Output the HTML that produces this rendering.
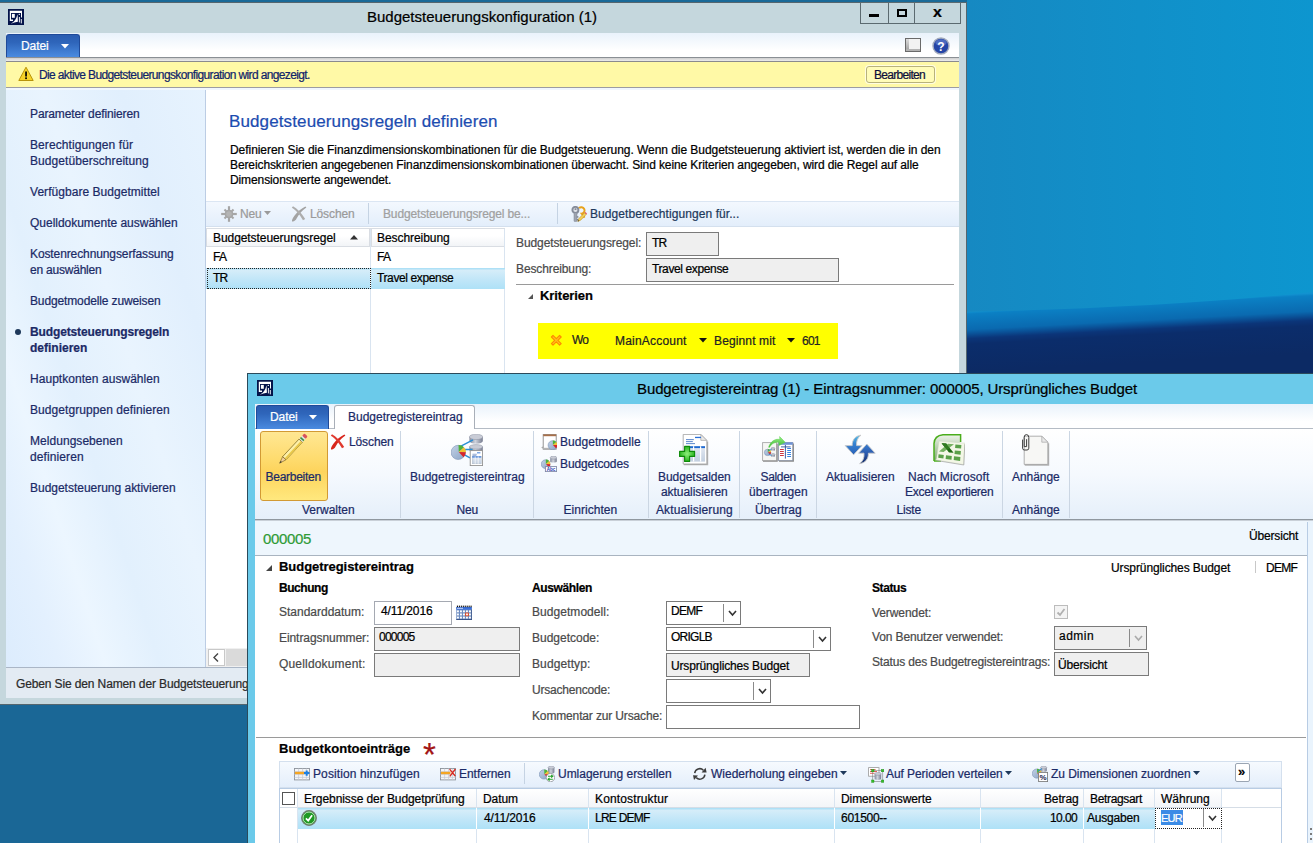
<!DOCTYPE html>
<html lang="de"><head><meta charset="utf-8"><title>Budgetsteuerungskonfiguration</title>
<style>
html,body{margin:0;padding:0}
body{width:1313px;height:843px;overflow:hidden;position:relative;font-family:"Liberation Sans", sans-serif;background:#1088c4}
body div,body svg,body span.t{position:absolute;box-sizing:border-box}
span.t{white-space:pre;-webkit-text-stroke:0.22px currentColor}

.fld{border:1px solid #7a7a7a;background:#fff}
.fldg{border:1px solid #7a7a7a;background:#efefef}

</style></head><body>
<svg width="0" height="0" style="left:0;top:0"><defs>
<linearGradient id="gPie" x1="0" y1="0" x2="1" y2="1"><stop offset="0" stop-color="#c3d2e6"/><stop offset="1" stop-color="#8aa3c6"/></linearGradient>
<linearGradient id="gCyl" x1="0" y1="0" x2="1" y2="0"><stop offset="0" stop-color="#838a9d"/><stop offset="0.45" stop-color="#cfd3dc"/><stop offset="1" stop-color="#757b8f"/></linearGradient>
<linearGradient id="gArrD" x1="0" y1="0" x2="0" y2="1"><stop offset="0" stop-color="#58bfe8"/><stop offset="0.45" stop-color="#3580d0"/><stop offset="1" stop-color="#2a62b8"/></linearGradient>
<linearGradient id="gArrU" x1="0" y1="0" x2="0" y2="1"><stop offset="0" stop-color="#3a7ed0"/><stop offset="0.5" stop-color="#2a59ac"/><stop offset="1" stop-color="#132a66"/></linearGradient>
<linearGradient id="gGrn" x1="0" y1="0" x2="0" y2="1"><stop offset="0" stop-color="#9af08a"/><stop offset="1" stop-color="#35b52b"/></linearGradient>
<linearGradient id="gXl" x1="0" y1="0" x2="0" y2="1"><stop offset="0" stop-color="#eef3ea"/><stop offset="1" stop-color="#7fa870"/></linearGradient>
<linearGradient id="gTbl" x1="0" y1="0" x2="0" y2="1"><stop offset="0" stop-color="#e3e9f2"/><stop offset="1" stop-color="#c2cfe0"/></linearGradient>
<radialGradient id="gPlus" cx="0.5" cy="0.5" r="0.6"><stop offset="0" stop-color="#8df07a"/><stop offset="1" stop-color="#16a80e"/></radialGradient>
</defs></svg>
<div style="left:0px;top:0px;width:1313px;height:843px;background:linear-gradient(90deg,#1a6a98 0,#1a6a98 960px,#1689c2 967px,#1190c9 1140px,#0d96cf 1313px)"></div>
<svg style="left:960px;top:280px" width="353" height="100" viewBox="0 0 353 100"><defs><linearGradient id="dk" gradientUnits="userSpaceOnUse" x1="0" y1="32" x2="3.2" y2="92"><stop offset="0" stop-color="#1192d0"/><stop offset="0.04" stop-color="#0b80c4"/><stop offset="0.30" stop-color="#0a6ab0"/><stop offset="0.37" stop-color="#0a5298"/><stop offset="0.45" stop-color="#0b3579"/><stop offset="0.54" stop-color="#0b2d6b"/><stop offset="1" stop-color="#0c2a64"/></linearGradient></defs>
<path d="M0 32 Q200 28 353 12 L353 100 L0 100Z" fill="url(#dk)"/></svg>
<div style="left:0px;top:704px;width:260px;height:139px;background:#1a6796"></div>
<div style="left:0px;top:0px;width:967px;height:3px;background:#1a6a98"></div>
<div style="left:0px;top:2px;width:967px;height:703px;background:#c5d7dd;border:1px solid #55666e;border-left:none"></div>
<div style="left:860px;top:2px;width:101px;height:22px;border:1px solid #5b6a70;background:#c5d7dd"></div>
<div style="left:888px;top:3px;width:1px;height:20px;background:#5b6a70"></div>
<div style="left:914px;top:3px;width:1px;height:20px;background:#5b6a70"></div>
<div style="left:869px;top:14px;width:10px;height:3px;background:#000"></div>
<div style="left:897px;top:9px;width:10px;height:8px;border:2px solid #000"></div>
<span class="t" style="left:933px;top:3.66px;font-size:16px;line-height:16px;color:#000;font-weight:700;transform:scaleY(.9);transform-origin:50% 85%;">x</span>
<svg style="left:8px;top:9px" width="16" height="16" viewBox="0 0 16 16"><rect width="16" height="16" fill="#04144a"/><path d="M1.8 1.8H14V8.6H13V3.9H3V10.5H5V11.9H1.8Z" fill="#fff"/><rect x="3.9" y="4.9" width="2.9" height="3.9" fill="#fff"/><path d="M2.8 14.8Q7.6 12.6 9.6 5.2L9.9 12.8Q6.4 13.4 2.8 14.8Z" fill="#fff"/><circle cx="11.3" cy="5.4" r="0.65" fill="#fff"/><rect x="10.9" y="8" width="0.95" height="5.4" fill="#fff"/><rect x="12.8" y="10" width="0.95" height="4.4" fill="#fff"/></svg>
<span class="t" style="left:367px;top:9.3px;font-size:15px;line-height:15px;color:#000;letter-spacing:-0.005px;">Budgetsteuerungskonfiguration (1)</span>
<div style="left:6px;top:33px;width:953px;height:665px;background:#fff"></div>
<div style="left:6px;top:33px;width:953px;height:25px;background:linear-gradient(#e9f2fb,#ffffff 70%)"></div>
<div style="left:6px;top:57px;width:953px;height:1px;background:#8a8f94"></div>
<div style="left:6px;top:58px;width:953px;height:3px;background:linear-gradient(#cfcfcf,#ececec)"></div>
<div style="left:6px;top:34px;width:74px;height:23px;background:linear-gradient(#2a5cb0 0%,#2f66bb 35%,#4a8be0 100%);border:1px solid #1f4a99;border-bottom:none;border-radius:3px 3px 0 0"></div>
<span class="t" style="left:21px;top:39.84px;font-size:12px;line-height:12px;color:#fff;letter-spacing:-0.087px;">Datei</span>
<svg style="left:61px;top:44px" width="8" height="5" viewBox="0 0 8 5"><path d="M0 0H8L4 4.5Z" fill="#fff"/></svg>
<div style="left:905px;top:38px;width:16px;height:14px;border:1px solid #6a6a6a;background:#f2f2f2"></div>
<div style="left:906px;top:39px;width:3px;height:10px;background:linear-gradient(#dcdcdc,#a8a8a8)"></div>
<div style="left:906px;top:49px;width:14px;height:2px;background:#b2b2b2"></div>
<svg style="left:932px;top:37px" width="18" height="18" viewBox="0 0 18 18"><circle cx="9" cy="9" r="8" fill="#2545a6" stroke="#a3abbd" stroke-width="1.4"/><ellipse cx="9" cy="5.6" rx="5.6" ry="3.4" fill="#6f8ad6" opacity="0.55"/><text x="9" y="13.5" font-size="12" font-weight="700" fill="#fff" text-anchor="middle" font-family="Liberation Sans, sans-serif">?</text></svg>
<div style="left:6px;top:61px;width:953px;height:27px;background:#fff9a6;border-top:1px solid #8a8a8e;border-bottom:1px solid #9c9ca2"></div>
<div style="left:6px;top:88px;width:953px;height:2px;background:#f1f7fe"></div>
<svg style="left:18px;top:66px" width="16" height="16" viewBox="0 0 16 16"><path d="M8 1.2L15.2 14.5H0.8Z" fill="#f7d228" stroke="#b8930a" stroke-width="1" stroke-linejoin="round"/><rect x="7.2" y="5.5" width="1.7" height="5" fill="#000"/><rect x="7.2" y="11.4" width="1.7" height="1.7" fill="#000"/></svg>
<span class="t" style="left:39px;top:68.84px;font-size:12px;line-height:12px;color:#10246a;letter-spacing:-0.634px;">Die aktive Budgetsteuerungskonfiguration wird angezeigt.</span>
<div style="left:866px;top:66px;width:69px;height:17px;border:1px solid #b8b27a;border-radius:3px;background:#fffcb8;box-shadow:0 0 0 1px #fffde0"></div>
<span class="t" style="left:874px;top:68.84px;font-size:12px;line-height:12px;color:#0c0c3a;letter-spacing:-0.708px;">Bearbeiten</span>
<div style="left:6px;top:90px;width:200px;height:578px;background:linear-gradient(72deg,#dcecfd 0%,#e3f0fe 14%,#ecf6ff 26%,#e2f0fd 40%,#e9f4fe 58%,#e1effd 78%,#e7f3fe 100%)"></div>
<div style="left:205px;top:90px;width:1px;height:578px;background:#bccde4"></div>
<span class="t" style="left:30px;top:107.84px;font-size:12px;line-height:12px;color:#1b2a66;letter-spacing:-0.126px;">Parameter definieren</span>
<span class="t" style="left:30px;top:138.84px;font-size:12px;line-height:12px;color:#1b2a66;letter-spacing:0.094px;">Berechtigungen für</span>
<span class="t" style="left:30px;top:154.84px;font-size:12px;line-height:12px;color:#1b2a66;letter-spacing:0.066px;">Budgetüberschreitung</span>
<span class="t" style="left:30px;top:185.84px;font-size:12px;line-height:12px;color:#1b2a66;letter-spacing:0.042px;">Verfügbare Budgetmittel</span>
<span class="t" style="left:30px;top:216.84px;font-size:12px;line-height:12px;color:#1b2a66;letter-spacing:-0.018px;">Quelldokumente auswählen</span>
<span class="t" style="left:30px;top:247.84px;font-size:12px;line-height:12px;color:#1b2a66;letter-spacing:-0.105px;">Kostenrechnungserfassung</span>
<span class="t" style="left:30px;top:263.84px;font-size:12px;line-height:12px;color:#1b2a66;letter-spacing:-0.217px;">en auswählen</span>
<span class="t" style="left:30px;top:294.84px;font-size:12px;line-height:12px;color:#1b2a66;letter-spacing:-0.131px;">Budgetmodelle zuweisen</span>
<span class="t" style="left:30px;top:372.84px;font-size:12px;line-height:12px;color:#1b2a66;letter-spacing:0.046px;">Hauptkonten auswählen</span>
<span class="t" style="left:30px;top:403.84px;font-size:12px;line-height:12px;color:#1b2a66;letter-spacing:0.068px;">Budgetgruppen definieren</span>
<span class="t" style="left:30px;top:434.84px;font-size:12px;line-height:12px;color:#1b2a66;letter-spacing:0.046px;">Meldungsebenen</span>
<span class="t" style="left:30px;top:450.84px;font-size:12px;line-height:12px;color:#1b2a66;letter-spacing:0.108px;">definieren</span>
<span class="t" style="left:30px;top:481.84px;font-size:12px;line-height:12px;color:#1b2a66;letter-spacing:-0.017px;">Budgetsteuerung aktivieren</span>
<span class="t" style="left:30px;top:325.84px;font-size:12px;line-height:12px;color:#1b2a66;font-weight:700;letter-spacing:-0.128px;">Budgetsteuerungsregeln</span>
<span class="t" style="left:30px;top:341.84px;font-size:12px;line-height:12px;color:#1b2a66;font-weight:700;letter-spacing:-0.002px;">definieren</span>
<div style="left:15px;top:329px;width:6px;height:6px;background:#1e395b;border-radius:3px"></div>
<div style="left:6px;top:667px;width:953px;height:1px;background:#aab6c6"></div>
<div style="left:6px;top:668px;width:953px;height:30px;background:#e3ebf3"></div>
<span class="t" style="left:16px;top:677.84px;font-size:12px;line-height:12px;color:#2a2a2a;letter-spacing:-0.127px;">Geben Sie den Namen der Budgetsteuerung</span>
<span class="t" style="left:229px;top:112.61px;font-size:17px;line-height:17px;color:#1c4cb0;letter-spacing:0.119px;">Budgetsteuerungsregeln definieren</span>
<span class="t" style="left:230px;top:143.84px;font-size:12px;line-height:12px;color:#000;letter-spacing:-0.053px;">Definieren Sie die Finanzdimensionskombinationen für die Budgetsteuerung. Wenn die Budgetsteuerung aktiviert ist, werden die in den</span>
<span class="t" style="left:230px;top:158.84px;font-size:12px;line-height:12px;color:#000;letter-spacing:-0.105px;">Bereichskriterien angegebenen Finanzdimensionskombinationen überwacht. Sind keine Kriterien angegeben, wird die Regel auf alle</span>
<span class="t" style="left:230px;top:173.84px;font-size:12px;line-height:12px;color:#000;letter-spacing:-0.106px;">Dimensionswerte angewendet.</span>
<div style="left:206px;top:201px;width:753px;height:26px;background:linear-gradient(#f3f8fe,#e3eefb);border-top:1px solid #dbe6f3;border-bottom:1px solid #d4e0ee"></div>
<svg style="left:221px;top:206px" width="16" height="16" viewBox="0 0 16 16"><g fill="#a6a6a6"><circle cx="8" cy="8" r="4.3"/><rect x="6.9" y="0.2" width="2.2" height="15.6" transform="rotate(0 8 8)"/><rect x="6.9" y="0.2" width="2.2" height="15.6" transform="rotate(90 8 8)"/><rect x="7" y="1.6" width="2" height="12.8" transform="rotate(45 8 8)"/><rect x="7" y="1.6" width="2" height="12.8" transform="rotate(135 8 8)"/></g><circle cx="8" cy="8" r="2.8" fill="#b4b4b4"/></svg>
<svg style="left:291px;top:206px" width="16" height="16" viewBox="0 0 16 16"><path d="M14.4 0.4C10.4 2.4 6.4 5.8 3.8 9.2C2 11.6 0.6 14 1 15.4C2.8 16 4.6 14.6 5.6 12.6C7.4 9 10.8 4.8 15.4 1.6Z" fill="#a3a3a3"/><path d="M0.8 1.8C4 3.6 8.4 8 12 14.2L14.2 13C11 7.2 5.8 2.4 2 0.2Z" fill="#adadad"/></svg>
<svg style="left:571px;top:206px" width="16" height="16" viewBox="0 0 16 16"><g><circle cx="4.4" cy="3.9" r="3" fill="#dfe2e8" stroke="#858c9a" stroke-width="1.9"/><rect x="3" y="6.6" width="3" height="9" rx="0.8" fill="#9ea4b0" stroke="#7b8290" stroke-width="0.5"/><rect x="5.8" y="10.2" width="1.6" height="1.5" fill="#7d8490"/><rect x="5.8" y="13" width="1.6" height="1.5" fill="#7d8490"/><rect x="3.6" y="2.4" width="1.8" height="1.4" fill="#6f7684"/><path d="M8 2.2A3.2 3.2 0 1 1 10.6 7.6L13.6 11.6" fill="none" stroke="#e8a21c" stroke-width="1.9"/><path d="M6.8 15.4L8 12.4L13.6 6.8L15.2 8.4L9.6 14.2Z" fill="#f5d25a" stroke="#b98a1a" stroke-width="0.6"/><path d="M13.6 6.8L14.4 6L16 7.6L15.2 8.4Z" fill="#e2525a"/><path d="M6.8 15.4L7.3 14.1L8.1 14.9Z" fill="#333"/></g></svg>
<span class="t" style="left:240px;top:207.84px;font-size:12px;line-height:12px;color:#9a9a9a;letter-spacing:-0.17px;">Neu</span>
<svg style="left:264px;top:211px" width="7" height="4" viewBox="0 0 7 4"><path d="M0 0H7L3.5 4Z" fill="#9a9a9a"/></svg>
<span class="t" style="left:310px;top:207.84px;font-size:12px;line-height:12px;color:#9a9a9a;letter-spacing:-0.116px;">Löschen</span>
<div style="left:368px;top:203px;width:1px;height:21px;background:#c5d3e3"></div>
<span class="t" style="left:383px;top:207.84px;font-size:12px;line-height:12px;color:#a0a0a0;letter-spacing:-0.132px;">Budgetsteuerungsregel be...</span>
<div style="left:557px;top:203px;width:1px;height:21px;background:#c5d3e3"></div>
<span class="t" style="left:590px;top:207.84px;font-size:12px;line-height:12px;color:#1e395b;letter-spacing:0.073px;">Budgetberechtigungen für...</span>
<div style="left:206px;top:228px;width:299px;height:19px;background:linear-gradient(#ffffff 40%,#f2f4f7);border:1px solid #d9dde3"></div>
<div style="left:369px;top:229px;width:3px;height:17px;background:#fff;border-left:1px solid #d9dde3;border-right:1px solid #d9dde3"></div>
<div style="left:370px;top:229px;width:1px;height:420px;background:#d9e4f0"></div>
<div style="left:504px;top:229px;width:1px;height:420px;background:#d9e4f0"></div>
<span class="t" style="left:213px;top:231.84px;font-size:12px;line-height:12px;color:#000;letter-spacing:-0.071px;">Budgetsteuerungsregel</span>
<svg style="left:350px;top:235px" width="8" height="5" viewBox="0 0 8 5"><path d="M4 0L8 4.5H0Z" fill="#333"/></svg>
<span class="t" style="left:377px;top:231.84px;font-size:12px;line-height:12px;color:#000;letter-spacing:-0.064px;">Beschreibung</span>
<span class="t" style="left:213px;top:250.84px;font-size:12px;line-height:12px;color:#000;letter-spacing:-0.668px;">FA</span>
<span class="t" style="left:377px;top:250.84px;font-size:12px;line-height:12px;color:#000;letter-spacing:-0.668px;">FA</span>
<div style="left:206px;top:268px;width:299px;height:21px;background:linear-gradient(#aee0f6 0,#aee0f6 1px,#d6edf9 2px,#c1e6f8 55%,#aee1f7 100%)"></div>
<div style="left:370px;top:268px;width:1px;height:21px;background:#fff"></div>
<div style="left:207px;top:268px;width:164px;height:21px;border:1px dotted #222"></div>
<span class="t" style="left:213px;top:271.84px;font-size:12px;line-height:12px;color:#000;letter-spacing:-0.75px;">TR</span>
<span class="t" style="left:377px;top:271.84px;font-size:12px;line-height:12px;color:#000;letter-spacing:-0.379px;">Travel expense</span>
<span class="t" style="left:516px;top:236.84px;font-size:12px;line-height:12px;color:#4a4a4a;letter-spacing:-0.1px;">Budgetsteuerungsregel:</span>
<div class="fldg" style="left:646px;top:232px;width:73px;height:24px;"></div>
<span class="t" style="left:652px;top:236.84px;font-size:12px;line-height:12px;color:#000;letter-spacing:-0.75px;">TR</span>
<span class="t" style="left:516px;top:262.84px;font-size:12px;line-height:12px;color:#4a4a4a;letter-spacing:-0.115px;">Beschreibung:</span>
<div class="fldg" style="left:646px;top:258px;width:193px;height:24px;"></div>
<span class="t" style="left:652px;top:262.84px;font-size:12px;line-height:12px;color:#000;letter-spacing:-0.379px;">Travel expense</span>
<div style="left:516px;top:284px;width:438px;height:1px;background:#9a9a9a"></div>
<svg style="left:528px;top:294px" width="5" height="5" viewBox="0 0 5 5"><path d="M5 0V5H0Z" fill="#555"/></svg>
<span class="t" style="left:540px;top:289.0px;font-size:13px;line-height:13px;color:#000;font-weight:700;letter-spacing:-0.065px;">Kriterien</span>
<div style="left:538px;top:323px;width:300px;height:36px;background:#ffff00"></div>
<svg style="left:550px;top:334px" width="13" height="13" viewBox="0 0 13 13"><path d="M1.4 3L3 1.4L6.3 4.7L9.6 1.4L11.2 3L7.9 6.3L11.2 9.6L9.6 11.2L6.3 7.9L3 11.2L1.4 9.6L4.7 6.3Z" fill="#ffc21a" stroke="#ff8a00" stroke-width="1.1" stroke-linejoin="round"/></svg>
<span class="t" style="left:572px;top:333.84px;font-size:12px;line-height:12px;color:#222;letter-spacing:-0.75px;">Wo</span>
<span class="t" style="left:615px;top:334.84px;font-size:12px;line-height:12px;color:#222;letter-spacing:0.196px;">MainAccount</span>
<svg style="left:699px;top:338px" width="8" height="5" viewBox="0 0 8 5"><path d="M0 0H8L4 4.5Z" fill="#111"/></svg>
<span class="t" style="left:714px;top:334.84px;font-size:12px;line-height:12px;color:#222;letter-spacing:0.13px;">Beginnt mit</span>
<svg style="left:787px;top:338px" width="8" height="5" viewBox="0 0 8 5"><path d="M0 0H8L4 4.5Z" fill="#111"/></svg>
<span class="t" style="left:802px;top:334.84px;font-size:12px;line-height:12px;color:#222;letter-spacing:-0.75px;">601</span>
<div style="left:206px;top:648px;width:60px;height:19px;background:#f0f0f0"></div>
<div style="left:208px;top:649px;width:17px;height:17px;background:#fff;border:1px solid #c8c8c8"></div>
<svg style="left:213px;top:653px" width="6" height="9" viewBox="0 0 6 9"><path d="M5 0.5L1 4.5L5 8.5" fill="none" stroke="#444" stroke-width="1.4"/></svg>
<div style="left:226px;top:649px;width:40px;height:17px;background:#dadada"></div>
<div style="left:247px;top:373px;width:1080px;height:480px;background:#6bcaea;border:1px solid #2b4a5a"></div>
<svg style="left:257px;top:380px" width="16" height="16" viewBox="0 0 16 16"><rect width="16" height="16" fill="#04144a"/><path d="M1.8 1.8H14V8.6H13V3.9H3V10.5H5V11.9H1.8Z" fill="#fff"/><rect x="3.9" y="4.9" width="2.9" height="3.9" fill="#fff"/><path d="M2.8 14.8Q7.6 12.6 9.6 5.2L9.9 12.8Q6.4 13.4 2.8 14.8Z" fill="#fff"/><circle cx="11.3" cy="5.4" r="0.65" fill="#fff"/><rect x="10.9" y="8" width="0.95" height="5.4" fill="#fff"/><rect x="12.8" y="10" width="0.95" height="4.4" fill="#fff"/></svg>
<span class="t" style="left:637px;top:381.3px;font-size:15px;line-height:15px;color:#000;letter-spacing:-0.106px;">Budgetregistereintrag (1) - Eintragsnummer: 000005, Ursprüngliches Budget</span>
<div style="left:255px;top:404px;width:1070px;height:450px;background:#fff"></div>
<div style="left:255px;top:404px;width:1070px;height:25px;background:linear-gradient(#e9f2fb,#ffffff 70%)"></div>
<div style="left:255px;top:428px;width:1070px;height:1px;background:#b5bcc5"></div>
<div style="left:256px;top:405px;width:73px;height:24px;background:linear-gradient(#2a5cb0 0%,#2f66bb 35%,#4a8be0 100%);border:1px solid #1f4a99;border-bottom:none;border-radius:3px 3px 0 0"></div>
<span class="t" style="left:270px;top:410.84px;font-size:12px;line-height:12px;color:#fff;letter-spacing:-0.087px;">Datei</span>
<svg style="left:309px;top:415px" width="8" height="5" viewBox="0 0 8 5"><path d="M0 0H8L4 4.5Z" fill="#fff"/></svg>
<div style="left:334px;top:405px;width:141px;height:24px;background:#fff;border:1px solid #a9afb8;border-bottom:none;border-radius:3px 3px 0 0"></div>
<span class="t" style="left:348px;top:410.84px;font-size:12px;line-height:12px;color:#1b2a66;letter-spacing:-0.003px;">Budgetregistereintrag</span>
<div style="left:255px;top:429px;width:1070px;height:91px;background:linear-gradient(#ffffff 0%,#f5f9fe 50%,#e5effa 100%)"></div>
<div style="left:255px;top:519px;width:1070px;height:1px;background:#8f979f"></div>
<div style="left:255px;top:520px;width:1070px;height:1px;background:#c9d0d8"></div>
<div style="left:400px;top:431px;width:1px;height:87px;background:#cbd6e3"></div>
<div style="left:533px;top:431px;width:1px;height:87px;background:#cbd6e3"></div>
<div style="left:648px;top:431px;width:1px;height:87px;background:#cbd6e3"></div>
<div style="left:739px;top:431px;width:1px;height:87px;background:#cbd6e3"></div>
<div style="left:816px;top:431px;width:1px;height:87px;background:#cbd6e3"></div>
<div style="left:1002px;top:431px;width:1px;height:87px;background:#cbd6e3"></div>
<div style="left:1069px;top:431px;width:1px;height:87px;background:#cbd6e3"></div>
<span class="t" style="left:302.0px;top:503.84px;font-size:12px;line-height:12px;color:#1b2a66;letter-spacing:-0.003px;">Verwalten</span>
<span class="t" style="left:456.5px;top:503.84px;font-size:12px;line-height:12px;color:#1b2a66;letter-spacing:-0.17px;">Neu</span>
<span class="t" style="left:563.5px;top:503.84px;font-size:12px;line-height:12px;color:#1b2a66;letter-spacing:0.035px;">Einrichten</span>
<span class="t" style="left:656.0px;top:503.84px;font-size:12px;line-height:12px;color:#1b2a66;letter-spacing:0.1px;">Aktualisierung</span>
<span class="t" style="left:755.0px;top:503.84px;font-size:12px;line-height:12px;color:#1b2a66;letter-spacing:-0.002px;">Übertrag</span>
<span class="t" style="left:896.5px;top:503.84px;font-size:12px;line-height:12px;color:#1b2a66;letter-spacing:-0.168px;">Liste</span>
<span class="t" style="left:1012.0px;top:503.84px;font-size:12px;line-height:12px;color:#1b2a66;letter-spacing:-0.062px;">Anhänge</span>
<div style="left:260px;top:431px;width:68px;height:70px;background:linear-gradient(#ffe793 0%,#fedb6e 40%,#fdd45c 58%,#ffe87e 100%);border:1px solid #d29a34;border-radius:3px"></div>
<svg style="left:276px;top:433px" width="34" height="34" viewBox="0 0 34 34"><g transform="translate(28.3 0.4) rotate(43)"><rect x="0" y="0" width="4.6" height="3.2" rx="1" fill="#d9525a"/><rect x="0" y="3.2" width="4.6" height="1.6" fill="#d8dde6"/><rect x="0" y="4.8" width="4.6" height="1.7" fill="#2f8f4e"/><rect x="0" y="6.5" width="4.6" height="1.3" fill="#d8dde6"/><rect x="0" y="7.8" width="4.6" height="24" fill="#fdf0a8" stroke="#7a6420" stroke-width="0.7"/><rect x="2.6" y="7.8" width="2" height="24" fill="#e9c84a"/><path d="M0 31.8H4.6L2.3 38.6Z" fill="#f3cf9a" stroke="#7a6420" stroke-width="0.6"/><path d="M1.5 36.2H3.1L2.3 38.8Z" fill="#2a2a2a"/></g></svg>
<svg style="left:330px;top:434px" width="16" height="16" viewBox="0 0 16 16"><path d="M14.4 0.4C10.4 2.4 6.4 5.8 3.8 9.2C2 11.6 0.6 14 1 15.4C2.8 16 4.6 14.6 5.6 12.6C7.4 9 10.8 4.8 15.4 1.6Z" fill="#d8261c"/><path d="M0.8 1.8C4 3.6 8.4 8 12 14.2L14.2 13C11 7.2 5.8 2.4 2 0.2Z" fill="#e0392e"/></svg>
<svg style="left:451px;top:434px" width="32" height="32" viewBox="0 0 32 32"><path d="M18.4 2.8880000000000003V7.111999999999998A6.7 2.688 0 0 0 31.799999999999997 7.111999999999998V2.8880000000000003Z" fill="url(#gCyl)"/><ellipse cx="25.099999999999998" cy="2.8880000000000003" rx="6.7" ry="2.688" fill="#c9ccd6" stroke="#8b90a0" stroke-width="0.5"/><path d="M18.4 12.84V16.36A6.7 2.24 0 0 0 31.799999999999997 16.36V12.84Z" fill="url(#gCyl)"/><ellipse cx="25.099999999999998" cy="12.84" rx="6.7" ry="2.24" fill="#c9ccd6" stroke="#8b90a0" stroke-width="0.5"/><path d="M9 12.6L22 5.8M12.6 15.6L21.6 15.4M12.6 20.4L19 23.8" stroke="#2a8fd6" stroke-width="1.5" fill="none"/><circle cx="7.2" cy="18.4" r="7.1" fill="url(#gPie)" stroke="#7d93b5" stroke-width="0.6"/><path d="M7.77 18.04L7.52 10.95A7.1 7.1 0 0 1 13.04 13.29Z" fill="#4fb23a"/><path d="M7.77 18.04L13.04 13.29A7.1 7.1 0 0 1 14.86 18.29Z" fill="#f2c230"/><path d="M7.77 18.04L14.86 18.29A7.1 7.1 0 0 1 12.52 23.32Z" fill="#d6262a"/><rect x="19.2" y="16.6" width="12.4" height="15" fill="#fff" stroke="#8f8f8f" stroke-width="0.9"/><rect x="26" y="18.4" width="3.4" height="0.9" fill="#2a6fd6"/><rect x="21.4" y="19.8" width="4.4" height="0.8" fill="#7a96c8"/><rect x="21.4" y="21" width="4" height="0.7" fill="#7a96c8"/><rect x="21.2" y="22.4" width="9" height="7.4" fill="url(#gTbl)" stroke="#a9b3c2" stroke-width="0.4"/><rect x="21.2" y="22.4" width="9" height="1.1" fill="#2a6fd6"/><path d="M24.2 22.4V29.8M27.2 22.4V29.8" stroke="#fff" stroke-width="0.7"/></svg>
<svg style="left:541px;top:434px" width="16" height="16" viewBox="0 0 16 16"><rect x="2.2" y="0.6" width="13" height="14.6" fill="#fff" stroke="#8a8a8a" stroke-width="0.9"/><rect x="2.2" y="0.4" width="13" height="1.8" fill="#a8704a"/><path d="M0.2 13.6L2.2 12.2V14.8Z" fill="#aaa"/><rect x="2.2" y="13.8" width="8" height="1.4" fill="#b5b5b5"/><circle cx="11.6" cy="11.2" r="4.5" fill="url(#gPie)" stroke="#7d93b5" stroke-width="0.6"/><path d="M11.96 10.97L11.80 6.48A4.5 4.5 0 0 1 15.30 7.96Z" fill="#4fb23a"/><path d="M11.96 10.97L15.30 7.96A4.5 4.5 0 0 1 16.46 11.13Z" fill="#f2c230"/><path d="M11.96 10.97L16.46 11.13A4.5 4.5 0 0 1 14.97 14.32Z" fill="#d6262a"/></svg>
<svg style="left:541px;top:456px" width="16" height="16" viewBox="0 0 16 16"><path d="M9.2 1.652V5.148000000000001A3.3 1.452 0 0 0 15.799999999999999 5.148000000000001V1.652Z" fill="url(#gCyl)"/><ellipse cx="12.5" cy="1.652" rx="3.3" ry="1.452" fill="#c9ccd6" stroke="#8b90a0" stroke-width="0.5"/><circle cx="4.6" cy="8.2" r="4.4" fill="url(#gPie)" stroke="#7d93b5" stroke-width="0.6"/><path d="M4.95 7.98L4.80 3.58A4.4 4.4 0 0 1 8.22 5.04Z" fill="#4fb23a"/><path d="M4.95 7.98L8.22 5.04A4.4 4.4 0 0 1 9.35 8.13Z" fill="#f2c230"/><path d="M4.95 7.98L9.35 8.13A4.4 4.4 0 0 1 7.90 11.25Z" fill="#d6262a"/><rect x="4.4" y="10.6" width="11.2" height="5" fill="#fff" stroke="#8088a8" stroke-width="0.9"/><text x="10" y="14.7" font-size="4.6" font-weight="700" fill="#2a3fb4" text-anchor="middle" font-family="Liberation Sans, sans-serif">Abc</text></svg>
<svg style="left:678px;top:434px" width="32" height="32" viewBox="0 0 32 32"><path d="M5.2 0.4H22.8L28.8 6.4V30.0H5.2Z" fill="#fff" stroke="#a6a6a6" stroke-width="0.9"/><path d="M22.8 0.4V6.4H28.8Z" fill="#e9e9e9" stroke="#a6a6a6" stroke-width="0.7"/><path d="M5.8 30.7H29.6V7.4" fill="none" stroke="#9a9a9a" stroke-width="1.2" opacity="0.75"/><rect x="17" y="2.8" width="6" height="1.3" fill="#2a6fd6"/><rect x="8" y="5.2" width="7.8" height="0.9" fill="#4a7cc8"/><rect x="8" y="7.2" width="6.8" height="0.9" fill="#4a7cc8"/><rect x="8" y="9.2" width="9" height="0.9" fill="#4a7cc8"/><rect x="11" y="12.2" width="16" height="15.4" fill="url(#gTbl)"/><rect x="11" y="12.2" width="16" height="1.9" fill="#1f6ad2"/><path d="M15.6 12.2V27.6M22.6 12.2V27.6" stroke="#fff" stroke-width="1.2"/><path d="M6.6 12.4H11.6V17.4H16.6V22.4H11.6V27.4H6.6V22.4H1.6V17.4H6.6Z" fill="url(#gPlus)" stroke="#0c8a08" stroke-width="1.1" stroke-linejoin="round"/></svg>
<svg style="left:762px;top:434px" width="32" height="32" viewBox="0 0 32 32"><rect x="0.6" y="8.6" width="14" height="18" fill="#f6f6f4" stroke="#a9a9a9" stroke-width="0.9"/><path d="M1 27.2H15.2V9.4" fill="none" stroke="#8c8c8c" stroke-width="1.1"/><rect x="16.6" y="8.6" width="14.2" height="18" fill="#fff" stroke="#8a94aa" stroke-width="0.9"/><rect x="16.6" y="8.4" width="14.2" height="2.4" fill="#6f93d6"/><path d="M17 27.2H31.4V9.4" fill="none" stroke="#8c8c8c" stroke-width="1.1"/><path d="M23.4 11V24.6M19 12.9H28.6" stroke="#2c4f9a" stroke-width="0.9"/><rect x="18" y="15" width="3.8" height="0.9" fill="#c8202a"/><rect x="18" y="17" width="3.8" height="0.9" fill="#c8202a"/><rect x="18" y="19" width="3.8" height="0.9" fill="#c8202a"/><rect x="18" y="21" width="3.8" height="0.9" fill="#c8202a"/><rect x="25.2" y="14" width="3.8" height="0.9" fill="#1f78e0"/><rect x="25.2" y="16" width="3.8" height="0.9" fill="#1f78e0"/><rect x="25.2" y="18" width="3.8" height="0.9" fill="#1f78e0"/><rect x="25.2" y="20" width="3.8" height="0.9" fill="#1f78e0"/><rect x="25.2" y="22" width="3.8" height="0.9" fill="#1f78e0"/><circle cx="5.6" cy="18.4" r="3.2" fill="url(#gPie)" stroke="#7d93b5" stroke-width="0.6"/><path d="M5.86 18.24L5.74 15.04A3.2 3.2 0 0 1 8.23 16.10Z" fill="#4fb23a"/><path d="M5.86 18.24L8.23 16.10A3.2 3.2 0 0 1 9.05 18.35Z" fill="#f2c230"/><path d="M5.86 18.24L9.05 18.35A3.2 3.2 0 0 1 8.00 20.62Z" fill="#d6262a"/><path d="M9 14.280000000000001V15.92A2.0 0.88 0 0 0 13 15.92V14.280000000000001Z" fill="url(#gCyl)"/><ellipse cx="11.0" cy="14.280000000000001" rx="2.0" ry="0.88" fill="#c9ccd6" stroke="#8b90a0" stroke-width="0.5"/><path d="M9 20.48V22.12A2.0 0.88 0 0 0 13 22.12V20.48Z" fill="url(#gCyl)"/><ellipse cx="11.0" cy="20.48" rx="2.0" ry="0.88" fill="#c9ccd6" stroke="#8b90a0" stroke-width="0.5"/><path d="M6.6 17L9.4 15M6.8 20L9.4 21.6" stroke="#2a8fd6" stroke-width="0.9"/><path d="M6.6 13.2C8.8 6.4 14.4 4.4 17.8 5.6L17.6 2.6L23.2 8.2L16.8 11.6L17.2 8.6C13.6 7.6 9.6 9.4 7.4 13.4Z" fill="url(#gGrn)" stroke="#5fd04f" stroke-width="0.5"/></svg>
<svg style="left:844px;top:434px" width="32" height="32" viewBox="0 0 32 32"><path d="M17 1.2C11.2 1.8 8 6 8.2 11.6H1.2L9.6 20.8L18 11.6H12.6C12.2 7.2 13.6 3.4 17 1.2Z" fill="url(#gArrD)" stroke="#c9c9c9" stroke-width="0.9"/><path d="M15.6 29.6C21.4 29 24.6 24.8 24.4 19.2H31.2L22.8 10L14.6 19.2H20C20.4 23.6 19 27.4 15.6 29.6Z" fill="url(#gArrU)" stroke="#c9c9c9" stroke-width="0.9"/></svg>
<svg style="left:933px;top:434px" width="32" height="32" viewBox="0 0 32 32"><path d="M1 27V9.6Q1.4 1.6 10 0.8H27.6V8" fill="url(#gXl)" stroke="#4bad1c" stroke-width="1.5"/><path d="M1 27H8" stroke="#4bad1c" stroke-width="1.5"/><path d="M6 7L32 9.2L30.6 30.6L3.4 26Z" fill="#f3f7e6" stroke="#cfd6c2" stroke-width="0.5"/><path d="M31.8 10.2L30.8 31L4 26.6" fill="none" stroke="#9a9a9a" stroke-width="0.9" opacity="0.7"/><path d="M22.4 10.4L28.4 10.9L28.1 14.6L22.1 14L22.4 10.4ZM21.8 16.4L27.9 17L27.6 20.8L21.5 20.1ZM5.6 20.2L10.8 20.9L10.4 24.6L5.2 23.8ZM13 21.2L18.8 21.9L18.5 25.8L12.6 25ZM21 22.2L27.4 23L27.1 27L20.7 26.1Z" fill="#5aa04a"/><path d="M8.6 9.2L13.2 9.6L20.6 18.8L16 18.4Z" fill="#1f6a14"/><path d="M15 9.8L21 10.3L10.6 18L6 17.6Z" fill="#74b060"/><path d="M8.6 9.2L13.2 9.6L17 14.4L13.6 15.6Z" fill="#2f7a20"/></svg>
<svg style="left:1020px;top:434px" width="32" height="32" viewBox="0 0 32 32"><path d="M4.2 2.2H21.8L27.8 8.2V30.4H4.2Z" fill="#f7f7f5" stroke="#a6a6a6" stroke-width="0.9"/><path d="M21.8 2.2V8.2H27.8Z" fill="#e9e9e9" stroke="#a6a6a6" stroke-width="0.7"/><path d="M4.8 31.099999999999998H28.6V9.2" fill="none" stroke="#9a9a9a" stroke-width="1.2" opacity="0.75"/><path d="M2.6 5.6V14.2Q2.6 16 4.4 16H7Q8.8 16 8.8 14.2V3.4Q8.8 0.6 6.4 0.6Q4.2 0.6 4.2 3.4V12.6H6.6V5.2" fill="none" stroke="#3c3c3c" stroke-width="1"/></svg>
<span class="t" style="left:265.5px;top:470.84px;font-size:12px;line-height:12px;color:#1b2a66;letter-spacing:-0.263px;">Bearbeiten</span>
<span class="t" style="left:349px;top:435.84px;font-size:12px;line-height:12px;color:#1b2a66;letter-spacing:-0.116px;">Löschen</span>
<span class="t" style="left:410.0px;top:470.84px;font-size:12px;line-height:12px;color:#1b2a66;letter-spacing:-0.003px;">Budgetregistereintrag</span>
<span class="t" style="left:560px;top:435.84px;font-size:12px;line-height:12px;color:#1b2a66;letter-spacing:0.051px;">Budgetmodelle</span>
<span class="t" style="left:560px;top:457.84px;font-size:12px;line-height:12px;color:#1b2a66;letter-spacing:-0.105px;">Budgetcodes</span>
<span class="t" style="left:658.0px;top:470.84px;font-size:12px;line-height:12px;color:#1b2a66;letter-spacing:-0.066px;">Budgetsalden</span>
<span class="t" style="left:661.0px;top:485.84px;font-size:12px;line-height:12px;color:#1b2a66;letter-spacing:-0.058px;">aktualisieren</span>
<span class="t" style="left:760.5px;top:470.84px;font-size:12px;line-height:12px;color:#1b2a66;letter-spacing:-0.338px;">Salden</span>
<span class="t" style="left:749.0px;top:485.84px;font-size:12px;line-height:12px;color:#1b2a66;letter-spacing:0.07px;">übertragen</span>
<span class="t" style="left:826.0px;top:470.84px;font-size:12px;line-height:12px;color:#1b2a66;letter-spacing:-0.002px;">Aktualisieren</span>
<span class="t" style="left:908.0px;top:470.84px;font-size:12px;line-height:12px;color:#1b2a66;letter-spacing:0.101px;">Nach Microsoft</span>
<span class="t" style="left:905.0px;top:485.84px;font-size:12px;line-height:12px;color:#1b2a66;letter-spacing:-0.252px;">Excel exportieren</span>
<span class="t" style="left:1012.0px;top:470.84px;font-size:12px;line-height:12px;color:#1b2a66;letter-spacing:-0.062px;">Anhänge</span>
<div style="left:255px;top:521px;width:1053px;height:35px;background:#eef6fd;border-bottom:1px solid #a9b4c0"></div>
<span class="t" style="left:263px;top:531.3px;font-size:15px;line-height:15px;color:#2f9b37;letter-spacing:-0.342px;">000005</span>
<span class="t" style="left:1249px;top:529.84px;font-size:12px;line-height:12px;color:#000;letter-spacing:-0.169px;">Übersicht</span>
<svg style="left:266px;top:565px" width="6" height="6" viewBox="0 0 6 6"><path d="M6 0V6H0Z" fill="#444"/></svg>
<span class="t" style="left:279px;top:560.0px;font-size:13px;line-height:13px;color:#000;font-weight:700;letter-spacing:-0.043px;">Budgetregistereintrag</span>
<span class="t" style="left:1111px;top:561.84px;font-size:12px;line-height:12px;color:#000;letter-spacing:-0.103px;">Ursprüngliches Budget</span>
<div style="left:1255px;top:561px;width:1px;height:12px;background:#c8c8c8"></div>
<span class="t" style="left:1266px;top:561.84px;font-size:12px;line-height:12px;color:#000;letter-spacing:-0.75px;">DEMF</span>
<span class="t" style="left:279px;top:581.84px;font-size:12px;line-height:12px;color:#000;font-weight:700;letter-spacing:-0.443px;">Buchung</span>
<span class="t" style="left:532px;top:581.84px;font-size:12px;line-height:12px;color:#000;font-weight:700;letter-spacing:-0.377px;">Auswählen</span>
<span class="t" style="left:872px;top:581.84px;font-size:12px;line-height:12px;color:#000;font-weight:700;letter-spacing:-0.4px;">Status</span>
<span class="t" style="left:279px;top:605.84px;font-size:12px;line-height:12px;color:#4a4a4a;letter-spacing:-0.004px;">Standarddatum:</span>
<div class="fld" style="left:374px;top:601px;width:78px;height:24px;border-color:#a5a9b2;"></div>
<span class="t" style="left:381px;top:604.84px;font-size:12px;line-height:12px;color:#000;letter-spacing:-0.103px;">4/11/2016</span>
<svg style="left:456px;top:605px" width="16" height="16" viewBox="0 0 16 16"><rect x="0.3" y="2" width="15.4" height="13" fill="#6d8cc0"/><rect x="0.3" y="2" width="15.4" height="2.6" fill="#3b70dc"/><rect x="1" y="2.8" width="6" height="0.9" fill="#dbe6fb"/><path d="M0.3 14.2H15.7V15H0.3Z" fill="#2c477c"/><path d="M15 4.6H15.7V15H15Z" fill="#2c477c"/><rect x="1" y="5.4" width="1.9" height="1.9" fill="#fff"/><rect x="1" y="8.5" width="1.9" height="1.9" fill="#fff"/><rect x="1" y="11.600000000000001" width="1.9" height="1.9" fill="#fff"/><rect x="4" y="5.4" width="1.9" height="1.9" fill="#fff"/><rect x="4" y="8.5" width="1.9" height="1.9" fill="#fff"/><rect x="4" y="11.600000000000001" width="1.9" height="1.9" fill="#fff"/><rect x="7" y="5.4" width="1.9" height="1.9" fill="#fff"/><rect x="7" y="8.5" width="1.9" height="1.9" fill="#fff"/><rect x="7" y="11.600000000000001" width="1.9" height="1.9" fill="#fff"/><rect x="10" y="5.4" width="1.9" height="1.9" fill="#fff"/><rect x="10" y="8.5" width="1.9" height="1.9" fill="#fff"/><rect x="10" y="11.600000000000001" width="1.9" height="1.9" fill="#fff"/><rect x="13" y="5.4" width="1.9" height="1.9" fill="#fff"/><rect x="13" y="8.5" width="1.9" height="1.9" fill="#fff"/><rect x="13" y="11.600000000000001" width="1.9" height="1.9" fill="#fff"/><rect x="9.2" y="7.6" width="3.6" height="3.6" fill="#e8461a"/><rect x="10.1" y="8.5" width="1.8" height="1.8" fill="#fff"/><rect x="0.9" y="0.6" width="1.1" height="1.6" fill="#111"/><rect x="2.85" y="0.6" width="1.1" height="1.6" fill="#111"/><rect x="4.8" y="0.6" width="1.1" height="1.6" fill="#111"/><rect x="6.75" y="0.6" width="1.1" height="1.6" fill="#111"/><rect x="8.7" y="0.6" width="1.1" height="1.6" fill="#111"/><rect x="10.65" y="0.6" width="1.1" height="1.6" fill="#111"/><rect x="12.6" y="0.6" width="1.1" height="1.6" fill="#111"/><rect x="14.55" y="0.6" width="1.1" height="1.6" fill="#111"/></svg>
<span class="t" style="left:279px;top:631.84px;font-size:12px;line-height:12px;color:#4a4a4a;letter-spacing:-0.074px;">Eintragsnummer:</span>
<div class="fldg" style="left:374px;top:627px;width:146px;height:24px;"></div>
<span class="t" style="left:379px;top:630.84px;font-size:12px;line-height:12px;color:#000;letter-spacing:-0.75px;">000005</span>
<span class="t" style="left:279px;top:657.84px;font-size:12px;line-height:12px;color:#4a4a4a;letter-spacing:0.176px;">Quelldokument:</span>
<div class="fldg" style="left:374px;top:653px;width:146px;height:24px;"></div>
<span class="t" style="left:532px;top:605.84px;font-size:12px;line-height:12px;color:#4a4a4a;letter-spacing:0.051px;">Budgetmodell:</span>
<div class="fld" style="left:666px;top:601px;width:75px;height:24px;"></div>
<span class="t" style="left:671px;top:604.84px;font-size:12px;line-height:12px;color:#000;letter-spacing:-0.75px;">DEMF</span>
<div style="left:723px;top:604px;width:1px;height:18px;background:#8a8a8a"></div>
<svg style="left:728px;top:610px" width="9" height="7" viewBox="0 0 9 7"><path d="M1 1L4.5 5L8 1" fill="none" stroke="#333" stroke-width="1.6"/></svg>
<span class="t" style="left:532px;top:631.84px;font-size:12px;line-height:12px;color:#4a4a4a;letter-spacing:-0.005px;">Budgetcode:</span>
<div class="fld" style="left:666px;top:627px;width:165px;height:24px;"></div>
<span class="t" style="left:671px;top:630.84px;font-size:12px;line-height:12px;color:#000;letter-spacing:-0.75px;">ORIGLB</span>
<div style="left:813px;top:630px;width:1px;height:18px;background:#8a8a8a"></div>
<svg style="left:818px;top:636px" width="9" height="7" viewBox="0 0 9 7"><path d="M1 1L4.5 5L8 1" fill="none" stroke="#333" stroke-width="1.6"/></svg>
<span class="t" style="left:532px;top:657.84px;font-size:12px;line-height:12px;color:#4a4a4a;letter-spacing:0.107px;">Budgettyp:</span>
<div class="fldg" style="left:666px;top:653px;width:144px;height:24px;"></div>
<span class="t" style="left:671px;top:659.84px;font-size:12px;line-height:12px;color:#000;letter-spacing:-0.153px;">Ursprüngliches Budget</span>
<span class="t" style="left:532px;top:683.84px;font-size:12px;line-height:12px;color:#4a4a4a;letter-spacing:-0.198px;">Ursachencode:</span>
<div class="fld" style="left:666px;top:679px;width:105px;height:24px;"></div>
<div style="left:753px;top:682px;width:1px;height:18px;background:#8a8a8a"></div>
<svg style="left:758px;top:688px" width="9" height="7" viewBox="0 0 9 7"><path d="M1 1L4.5 5L8 1" fill="none" stroke="#333" stroke-width="1.6"/></svg>
<span class="t" style="left:532px;top:709.84px;font-size:12px;line-height:12px;color:#4a4a4a;letter-spacing:-0.145px;">Kommentar zur Ursache:</span>
<div class="fld" style="left:666px;top:705px;width:194px;height:24px;"></div>
<span class="t" style="left:872px;top:606.84px;font-size:12px;line-height:12px;color:#4a4a4a;letter-spacing:-0.079px;">Verwendet:</span>
<div style="left:1054px;top:605px;width:14px;height:14px;border:1px solid #bcbcbc;background:#f4f4f4"></div>
<svg style="left:1056px;top:607px" width="10" height="10" viewBox="0 0 10 10"><path d="M1.5 5.5L4 8L8.5 2" fill="none" stroke="#b0b0b0" stroke-width="1.8"/></svg>
<span class="t" style="left:872px;top:630.84px;font-size:12px;line-height:12px;color:#4a4a4a;letter-spacing:-0.125px;">Von Benutzer verwendet:</span>
<div class="fldg" style="left:1054px;top:626px;width:93px;height:24px;"></div>
<span class="t" style="left:1059px;top:629.84px;font-size:12px;line-height:12px;color:#000;letter-spacing:0.498px;">admin</span>
<div style="left:1129px;top:629px;width:1px;height:18px;background:#8a8a8a"></div>
<svg style="left:1134px;top:635px" width="9" height="7" viewBox="0 0 9 7"><path d="M1 1L4.5 5L8 1" fill="none" stroke="#aaa" stroke-width="1.6"/></svg>
<span class="t" style="left:872px;top:655.84px;font-size:12px;line-height:12px;color:#4a4a4a;letter-spacing:-0.175px;">Status des Budgetregistereintrags:</span>
<div class="fldg" style="left:1054px;top:652px;width:95px;height:24px;"></div>
<span class="t" style="left:1058px;top:658.84px;font-size:12px;line-height:12px;color:#000;letter-spacing:-0.169px;">Übersicht</span>
<div style="left:256px;top:737px;width:1050px;height:1px;background:#9a9a9a"></div>
<div style="left:1307px;top:522px;width:1px;height:330px;background:#b8cce4"></div>
<div style="left:1308px;top:521px;width:6px;height:330px;background:#eaf4fd"></div>
<div style="left:1310px;top:828px;width:2px;height:2px;background:#7c7c7c"></div>
<div style="left:1310px;top:833px;width:2px;height:2px;background:#7c7c7c"></div>
<div style="left:1310px;top:838px;width:2px;height:2px;background:#7c7c7c"></div>
<span class="t" style="left:279px;top:742.0px;font-size:13px;line-height:13px;color:#000;font-weight:700;letter-spacing:0.028px;">Budgetkontoeinträge</span>
<span class="t" style="left:423px;top:737.57px;font-size:33px;line-height:33px;color:#a31515;">*</span>
<div style="left:279px;top:761px;width:1003px;height:27px;background:linear-gradient(#f6fafe,#e4eefb);border:1px solid #d4e0ee"></div>
<svg style="left:294px;top:766px" width="16" height="16" viewBox="0 0 16 16"><rect x="0.5" y="2.5" width="15" height="11.4" fill="#f4f6f9" stroke="#8d929b" stroke-width="0.9"/><path d="M0.5 5.6H15.5M0.5 8.6H15.5M0.5 11.4H15.5M4.6 2.5V14M8.6 2.5V14M12.4 2.5V14" stroke="#c4c9d2" stroke-width="0.7"/><rect x="1" y="5.8" width="9.4" height="2.4" fill="#f5a623"/><path d="M11.7 4.4H13.7V6H15.4V8H13.7V9.7H11.7V8H10V6H11.7Z" fill="#1d80e2"/></svg>
<svg style="left:440px;top:766px" width="16" height="16" viewBox="0 0 16 16"><rect x="0.5" y="2.5" width="15" height="11.4" fill="#f4f6f9" stroke="#8d929b" stroke-width="0.9"/><path d="M0.5 5.6H15.5M0.5 8.6H15.5M0.5 11.4H15.5M4.6 2.5V14M8.6 2.5V14M12.4 2.5V14" stroke="#c4c9d2" stroke-width="0.7"/><rect x="1" y="5.8" width="9.4" height="2.4" fill="#f5a623"/><path d="M9.6 3.2L15.2 10M15.4 3L9.8 10.4" stroke="#d8281e" stroke-width="1.3" fill="none"/></svg>
<svg style="left:539px;top:766px" width="16" height="16" viewBox="0 0 16 16"><path d="M9 1.608V6.192A3.2 1.4080000000000001 0 0 0 15.4 6.192V1.608Z" fill="url(#gCyl)"/><ellipse cx="12.2" cy="1.608" rx="3.2" ry="1.4080000000000001" fill="#c9ccd6" stroke="#8b90a0" stroke-width="0.5"/><circle cx="5" cy="8.4" r="4.7" fill="url(#gPie)" stroke="#7d93b5" stroke-width="0.6"/><path d="M5.38 8.17L5.21 3.47A4.7 4.7 0 0 1 8.87 5.02Z" fill="#4fb23a"/><path d="M5.38 8.17L8.87 5.02A4.7 4.7 0 0 1 10.07 8.33Z" fill="#f2c230"/><path d="M5.38 8.17L10.07 8.33A4.7 4.7 0 0 1 8.52 11.66Z" fill="#d6262a"/><circle cx="11.4" cy="11.6" r="4.2" fill="#fff" stroke="#8a8f98" stroke-width="0.8"/><path d="M9 10.2H13.4M12.2 8.8L13.8 10.2L12.2 11.6M13.8 13.2H9.4M10.6 11.8L9 13.2L10.6 14.6" fill="none" stroke="#22a02a" stroke-width="1.1"/></svg>
<svg style="left:692px;top:766px" width="16" height="16" viewBox="0 0 16 16"><path d="M2.7 7.2A5.1 5.1 0 0 1 11.4 4.2" fill="none" stroke="#3d3d3d" stroke-width="1.5"/><path d="M9.6 6.4L14.6 6.6L13.6 1.8Z" fill="#3d3d3d"/><path d="M12.9 8.6A5.1 5.1 0 0 1 4.2 11.6" fill="none" stroke="#3d3d3d" stroke-width="1.5"/><path d="M6 9.4L1 9.2L2 14Z" fill="#3d3d3d"/></svg>
<svg style="left:868px;top:767px" width="16" height="16" viewBox="0 0 16 16"><rect x="0.6" y="0.6" width="10.4" height="8.6" fill="#fff" stroke="#9a9a9a" stroke-width="0.8"/><rect x="2" y="2.2" width="5.6" height="0.9" fill="#e0524a"/><rect x="2" y="4" width="7" height="0.9" fill="#e0524a"/><rect x="2" y="5.8" width="4.6" height="0.9" fill="#e0524a"/><path d="M6.6 6.852V11.548A3.3 1.452 0 0 0 13.2 11.548V6.852Z" fill="url(#gCyl)"/><ellipse cx="9.899999999999999" cy="6.852" rx="3.3" ry="1.452" fill="#c9ccd6" stroke="#8b90a0" stroke-width="0.5"/><rect x="4.8" y="3.6" width="10" height="10.8" fill="none" stroke="#6a6a6a" stroke-width="0.5"/><rect x="3.6" y="2.4" width="2.4" height="2.4" fill="#36c02a" stroke="#1c8a14" stroke-width="0.4"/><rect x="13.4" y="2.4" width="2.4" height="2.4" fill="#36c02a" stroke="#1c8a14" stroke-width="0.4"/><rect x="3.6" y="13" width="2.4" height="2.4" fill="#36c02a" stroke="#1c8a14" stroke-width="0.4"/><rect x="13.4" y="13" width="2.4" height="2.4" fill="#36c02a" stroke="#1c8a14" stroke-width="0.4"/></svg>
<svg style="left:1032px;top:766px" width="16" height="16" viewBox="0 0 16 16"><circle cx="4.8" cy="7.6" r="4.6" fill="url(#gPie)" stroke="#7d93b5" stroke-width="0.6"/><path d="M5.17 7.37L5.01 2.77A4.6 4.6 0 0 1 8.59 4.29Z" fill="#4fb23a"/><path d="M5.17 7.37L8.59 4.29A4.6 4.6 0 0 1 9.77 7.53Z" fill="#f2c230"/><path d="M5.17 7.37L9.77 7.53A4.6 4.6 0 0 1 8.25 10.79Z" fill="#d6262a"/><path d="M8.6 1.564V4.436A3.1 1.364 0 0 0 14.8 4.436V1.564Z" fill="url(#gCyl)"/><ellipse cx="11.7" cy="1.564" rx="3.1" ry="1.364" fill="#c9ccd6" stroke="#8b90a0" stroke-width="0.5"/><path d="M6 5.2L10 2.6" stroke="#2a8fd6" stroke-width="1"/><rect x="6.6" y="6.4" width="9" height="9.2" fill="#fff" stroke="#7a7a7a" stroke-width="0.9"/><text x="11.1" y="14.2" font-size="8" font-weight="700" fill="#16204a" text-anchor="middle" font-family="Liberation Sans, sans-serif">%</text></svg>
<span class="t" style="left:313px;top:767.84px;font-size:12px;line-height:12px;color:#1b2a66;letter-spacing:0.107px;">Position hinzufügen</span>
<span class="t" style="left:459px;top:767.84px;font-size:12px;line-height:12px;color:#1b2a66;letter-spacing:-0.045px;">Entfernen</span>
<div style="left:524px;top:763px;width:1px;height:21px;background:#c5d3e3"></div>
<span class="t" style="left:558px;top:767.84px;font-size:12px;line-height:12px;color:#1b2a66;letter-spacing:-0.02px;">Umlagerung erstellen</span>
<span class="t" style="left:711px;top:767.84px;font-size:12px;line-height:12px;color:#1b2a66;letter-spacing:-0.004px;">Wiederholung eingeben</span>
<svg style="left:840px;top:771px" width="7" height="4" viewBox="0 0 7 4"><path d="M0 0H7L3.5 4Z" fill="#1e395b"/></svg>
<span class="t" style="left:886px;top:767.84px;font-size:12px;line-height:12px;color:#1b2a66;letter-spacing:-0.067px;">Auf Perioden verteilen</span>
<svg style="left:1005px;top:771px" width="7" height="4" viewBox="0 0 7 4"><path d="M0 0H7L3.5 4Z" fill="#1e395b"/></svg>
<span class="t" style="left:1051px;top:767.84px;font-size:12px;line-height:12px;color:#1b2a66;letter-spacing:-0.049px;">Zu Dimensionen zuordnen</span>
<svg style="left:1193px;top:771px" width="7" height="4" viewBox="0 0 7 4"><path d="M0 0H7L3.5 4Z" fill="#1e395b"/></svg>
<div style="left:1235px;top:763px;width:15px;height:19px;border:1px solid #9aa5b3;background:#fff;border-radius:2px"></div>
<span class="t" style="left:1238px;top:765.0px;font-size:13px;line-height:13px;color:#000;font-weight:700;">»</span>
<div style="left:279px;top:789px;width:1003px;height:19px;background:#fff;border-bottom:1px solid #d5dde6"></div>
<div style="left:298px;top:789px;width:924px;height:18px;background:linear-gradient(#ffffff,#f3f5f8)"></div>
<div style="left:1281px;top:788px;width:1px;height:60px;background:#b8cce4"></div>
<div style="left:279px;top:788px;width:1003px;height:1px;background:#b8cce4"></div>
<div style="left:297px;top:789px;width:1px;height:60px;background:#d9e4f0"></div>
<div style="left:476px;top:789px;width:1px;height:60px;background:#d9e4f0"></div>
<div style="left:588px;top:789px;width:1px;height:60px;background:#d9e4f0"></div>
<div style="left:834px;top:789px;width:1px;height:60px;background:#d9e4f0"></div>
<div style="left:980px;top:789px;width:1px;height:60px;background:#d9e4f0"></div>
<div style="left:1083px;top:789px;width:1px;height:60px;background:#d9e4f0"></div>
<div style="left:1154px;top:789px;width:1px;height:60px;background:#d9e4f0"></div>
<div style="left:1221px;top:789px;width:1px;height:60px;background:#d9e4f0"></div>
<div style="left:279px;top:788px;width:1px;height:60px;background:#b8cce4"></div>
<div style="left:282px;top:792px;width:13px;height:13px;border:1px solid #555;background:#fff"></div>
<span class="t" style="left:304px;top:792.84px;font-size:12px;line-height:12px;color:#000;letter-spacing:-0.078px;">Ergebnisse der Budgetprüfung</span>
<span class="t" style="left:483px;top:792.84px;font-size:12px;line-height:12px;color:#000;letter-spacing:-0.087px;">Datum</span>
<span class="t" style="left:595px;top:792.84px;font-size:12px;line-height:12px;color:#000;letter-spacing:0.136px;">Kontostruktur</span>
<span class="t" style="left:841px;top:792.84px;font-size:12px;line-height:12px;color:#000;letter-spacing:-0.097px;">Dimensionswerte</span>
<span class="t" style="left:1044.0px;top:792.84px;font-size:12px;line-height:12px;color:#000;letter-spacing:-0.136px;">Betrag</span>
<span class="t" style="left:1090px;top:792.84px;font-size:12px;line-height:12px;color:#000;letter-spacing:-0.336px;">Betragsart</span>
<span class="t" style="left:1161px;top:792.84px;font-size:12px;line-height:12px;color:#000;letter-spacing:-0.003px;">Währung</span>
<div style="left:298px;top:808px;width:857px;height:21px;background:linear-gradient(#aee0f6 0,#aee0f6 1px,#d6edf9 2px,#c1e6f8 55%,#aee1f7 100%)"></div>
<div style="left:476px;top:808px;width:1px;height:21px;background:#fff"></div>
<div style="left:588px;top:808px;width:1px;height:21px;background:#fff"></div>
<div style="left:834px;top:808px;width:1px;height:21px;background:#fff"></div>
<div style="left:980px;top:808px;width:1px;height:21px;background:#fff"></div>
<div style="left:1083px;top:808px;width:1px;height:21px;background:#fff"></div>
<svg style="left:301px;top:810px" width="16" height="16" viewBox="0 0 16 16"><circle cx="8" cy="8" r="7.4" fill="#1f9a24" stroke="#7a7a7a" stroke-width="1.1"/><circle cx="8" cy="8" r="6" fill="none" stroke="#cfeacf" stroke-width="0.9"/><path d="M4.9 8.3L7.2 10.6L11.1 5.2" fill="none" stroke="#fff" stroke-width="1.7"/></svg>
<span class="t" style="left:484px;top:811.84px;font-size:12px;line-height:12px;color:#000;letter-spacing:-0.103px;">4/11/2016</span>
<span class="t" style="left:595px;top:811.84px;font-size:12px;line-height:12px;color:#000;letter-spacing:-0.75px;">LRE DEMF</span>
<span class="t" style="left:841px;top:811.84px;font-size:12px;line-height:12px;color:#000;letter-spacing:-0.291px;">601500--</span>
<span class="t" style="left:1050.0px;top:811.84px;font-size:12px;line-height:12px;color:#000;letter-spacing:-0.589px;">10.00</span>
<span class="t" style="left:1087px;top:811.84px;font-size:12px;line-height:12px;color:#000;letter-spacing:-0.196px;">Ausgaben</span>
<div style="left:1155px;top:808px;width:67px;height:21px;background:#fff;border:1px dotted #222"></div>
<div style="left:1161px;top:810px;width:22px;height:15px;background:#3b8be6"></div>
<span class="t" style="left:1161px;top:812.69px;font-size:11px;line-height:11px;color:#fff;letter-spacing:-0.75px;">EUR</span>
<div style="left:1203px;top:809px;width:1px;height:18px;background:#8a8a8a"></div>
<svg style="left:1208px;top:815px" width="9" height="7" viewBox="0 0 9 7"><path d="M1 1L4.5 5L8 1" fill="none" stroke="#333" stroke-width="1.6"/></svg>
</body></html>
